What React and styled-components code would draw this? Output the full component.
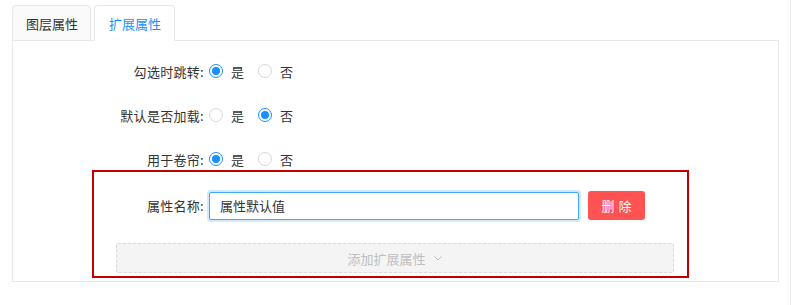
import React, { useState } from 'react'
import styled, { createGlobalStyle } from 'styled-components'

const GlobalStyle = createGlobalStyle`
    body {
        margin: 0;
        background: #fff;
        font-family: "Noto Sans CJK SC", "Noto Sans", sans-serif;
        font-size: 13px;
        color: #333;
    }
`;

const Page = styled.div`
    display: flex;
    width: 811px;
    height: 305px;
`;

const Main = styled.div`
    width: 778px;
    padding: 5px 0 0 12px;
    border-right: 1px solid #ececec;
`;

const TabBar = styled.div`
    display: flex;
    gap: 3px;
    height: 36px;
    margin-bottom: -1px;
    position: relative;
    z-index: 1;
`;

const Tab = styled.div`
    display: flex;
    align-items: center;
    padding: ${p => p.$active ? '0 13px 0 14px' : '0 12px 0 13px'};
    border: 1px solid #e8e8e8;
    border-bottom: ${p => p.$active ? '1px solid #fff' : '1px solid #e8e8e8'};
    border-radius: 4px 4px 0 0;
    background: ${p => p.$active ? '#fff' : '#fafafa'};
    color: ${p => p.$active ? '#1890ff' : '#333'};
    cursor: pointer;
`;

const Panel = styled.div`
    width: 767px;
    height: 242px;
    box-sizing: border-box;
    border: 1px solid #e8e8e8;
    padding-top: 20px;
`;

const Rows = styled.div`
    display: flex;
    flex-direction: column;
    gap: 24px;
`;

const Row = styled.div`
    display: flex;
    align-items: center;
    height: 20px;
`;

const Label = styled.div`
    width: ${p => p.$width}px;
    text-align: right;
    padding-right: 5px;
    box-sizing: border-box;
    white-space: nowrap;
    letter-spacing: 0.3px;
`;

const RadioItem = styled.label`
    display: flex;
    align-items: center;
    margin-right: 14px;
    cursor: pointer;
`;

const RadioCircle = styled.span`
    width: 14px;
    height: 14px;
    border-radius: 50%;
    box-sizing: border-box;
    border: 1px solid ${p => p.$checked ? '#1890ff' : '#d9d9d9'};
    display: flex;
    align-items: center;
    justify-content: center;
    margin-right: 8px;
    &::after {
        content: '';
        width: 8px;
        height: 8px;
        border-radius: 50%;
        background: #1890ff;
        display: ${p => p.$checked ? 'block' : 'none'};
    }
`;

const ExtBox = styled.div`
    margin: 1px 0 0 79px;
    width: 597px;
    height: 108px;
    box-sizing: border-box;
    border: 2px solid #c00000;
    padding: 19px 13px 0 22px;
`;

const FieldRow = styled.div`
    display: flex;
    align-items: center;
    margin-left: -22px;
`;

const Input = styled.input`
    width: 370px;
    height: 28px;
    box-sizing: border-box;
    border: 1px solid #40a9ff;
    border-radius: 2px;
    box-shadow: 0 0 0 2px rgba(24, 144, 255, 0.2);
    padding: 0 10px;
    font-family: inherit;
    font-size: 13px;
    color: #333;
    outline: none;
`;

const DangerButton = styled.button`
    margin-left: 9px;
    width: 57px;
    height: 29px;
    border: none;
    border-radius: 3px;
    background: #ff5252;
    color: #fff;
    font-family: inherit;
    font-size: 13px;
    letter-spacing: 4px;
    text-indent: 4px;
    cursor: pointer;
`;

const AddButton = styled.div`
    margin-top: 23px;
    height: 30px;
    box-sizing: border-box;
    border: 1px dashed #d9d9d9;
    border-radius: 2px;
    background: #f4f4f4;
    color: #bfbfbf;
    display: flex;
    align-items: center;
    justify-content: center;
    gap: 7px;
    font-size: 13px;
`;

const options = [
    { label: '勾选时跳转:', value: true },
    { label: '默认是否加载:', value: false },
    { label: '用于卷帘:', value: true },
];

const App = () => {
    const [values, setValues] = useState(options.map(o => o.value));
    const [tab, setTab] = useState(1);

    const setValue = (i, v) => {
        const next = [...values];
        next[i] = v;
        setValues(next);
    }

    return (
        <Page>
            <GlobalStyle />
            <Main>
                <TabBar>
                    <Tab $active={tab === 0} onClick={() => setTab(0)}>图层属性</Tab>
                    <Tab $active={tab === 1} onClick={() => setTab(1)}>扩展属性</Tab>
                </TabBar>
                <Panel>
                    <Rows>
                        {options.map((o, i) => (
                            <Row key={o.label}>
                                <Label $width={196}>{o.label}</Label>
                                <RadioItem onClick={() => setValue(i, true)}>
                                    <RadioCircle $checked={values[i]} />是
                                </RadioItem>
                                <RadioItem onClick={() => setValue(i, false)}>
                                    <RadioCircle $checked={!values[i]} />否
                                </RadioItem>
                            </Row>
                        ))}
                    </Rows>
                    <ExtBox>
                        <FieldRow>
                            <Label $width={115}>属性名称:</Label>
                            <Input defaultValue="属性默认值" />
                            <DangerButton>删除</DangerButton>
                        </FieldRow>
                        <AddButton>
                            添加扩展属性
                            <svg width="10" height="10" viewBox="0 0 10 10">
                                <path d="M1.5 3.5 L5 7 L8.5 3.5" fill="none" stroke="#bfbfbf" strokeWidth="1" />
                            </svg>
                        </AddButton>
                    </ExtBox>
                </Panel>
            </Main>
        </Page>
    )
}

export default App
